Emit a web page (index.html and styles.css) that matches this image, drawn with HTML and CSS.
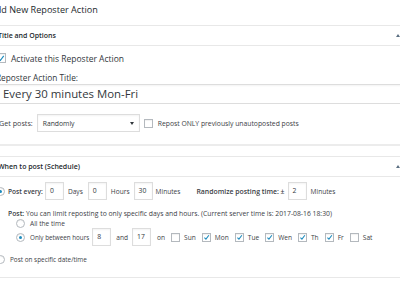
FILE: index.html
```html
<!DOCTYPE html>
<html>
<head>
<meta charset="utf-8">
<link rel="stylesheet" href="styles.css">
</head>
<body>
<div class="page">
  <h1 class="title">Add New Reposter Action</h1>

  <div class="box box-first">
    <div class="box-head"><span>Title and Options</span><span class="toggle"></span></div>
    <div class="box-body">
      <div class="row row-activate">
        <span class="cb checked"><svg viewBox="0 0 10 10"><path d="M2 5.2 L4.2 7.4 L8.4 1.8" /></svg></span>
        <span class="lbl-activate">Activate this Reposter Action</span>
      </div>
      <div class="field-label">Reposter Action Title:</div>
      <div class="big-input">Every 30 minutes Mon-Fri</div>
      <div class="row row-get">
        <span class="small get-lbl">Get posts:</span>
        <div class="select"><span>Randomly</span><span class="caret"></span></div>
        <span class="cb"></span>
        <span class="small">Repost ONLY previously unautoposted posts</span>
      </div>
    </div>
  </div>

  <div class="box box-second">
    <div class="box-head"><span>When to post (Schedule)</span><span class="toggle"></span></div>
    <div class="box-body">
      <div class="row row-every">
        <span class="radio checked"></span>
        <span class="tiny semi every">Post every:</span>
        <span class="num n-days">0</span><span class="tiny">Days</span>
        <span class="num n-hours">0</span><span class="tiny">Hours</span>
        <span class="num n-min">30</span><span class="tiny">Minutes</span>
        <span class="tiny semi rand">Randomize posting time: ±</span>
        <span class="num n-rand">2</span><span class="tiny">Minutes</span>
      </div>
      <div class="note small"><b>Post:</b> You can limit reposting to only specific days and hours. (Current server time is: 2017-08-16 18:30)</div>
      <div class="row row-all">
        <span class="radio"></span><span class="tiny">All the time</span>
      </div>
      <div class="row row-between">
        <span class="radio checked"></span><span class="tiny between-lbl">Only between hours</span>
        <span class="num n-from">8</span><span class="tiny">and</span>
        <span class="num n-to">17</span><span class="tiny">on</span>
        <span class="day"><span class="cb"></span><span class="tiny">Sun</span></span>
        <span class="day"><span class="cb checked"><svg viewBox="0 0 10 10"><path d="M2 5.2 L4.2 7.4 L8.4 1.8" /></svg></span><span class="tiny">Mon</span></span>
        <span class="day"><span class="cb checked"><svg viewBox="0 0 10 10"><path d="M2 5.2 L4.2 7.4 L8.4 1.8" /></svg></span><span class="tiny">Tue</span></span>
        <span class="day"><span class="cb checked"><svg viewBox="0 0 10 10"><path d="M2 5.2 L4.2 7.4 L8.4 1.8" /></svg></span><span class="tiny">Wen</span></span>
        <span class="day"><span class="cb checked"><svg viewBox="0 0 10 10"><path d="M2 5.2 L4.2 7.4 L8.4 1.8" /></svg></span><span class="tiny">Th</span></span>
        <span class="day"><span class="cb checked"><svg viewBox="0 0 10 10"><path d="M2 5.2 L4.2 7.4 L8.4 1.8" /></svg></span><span class="tiny">Fr</span></span>
        <span class="day"><span class="cb"></span><span class="tiny">Sat</span></span>
      </div>
      <div class="row row-date">
        <span class="radio"></span><span class="small date-lbl">Post on specific date/time</span>
      </div>
    </div>
  </div>
</div>
</body>
</html>
```
FILE: styles.css
```css
html, body {
  margin: 0;
  padding: 0;
  background: #ffffff;
  overflow: hidden;
}
body {
  width: 400px;
  height: 284px;
  font-family: "Open Sans", "Noto Sans", sans-serif;
  color: #32373c;
}
.page {
  margin-left: -14px;
  width: 430px;
}
.title {
  margin: 0 0 0 4px;
  height: 25px;
  line-height: 20px;
  font-size: 9.1px;
  font-weight: 400;
  color: #23282d;
}
.box {
  background: #fff;
  border-top: 1px solid #e8e8e8;
}
.box-first {
  border-bottom: 2px solid #ececec;
  margin-bottom: 10px;
}
.box-second {
  border-bottom: 1px solid #e8e8e8;
}
.box-head {
  height: 19px;
  line-height: 19px;
  padding: 0 16px 0 12px;
  border-bottom: 1px solid #e8e8e8;
  display: flex;
  justify-content: space-between;
  align-items: center;
  font-size: 7px;
  font-weight: 600;
  color: #23282d;
}
.toggle {
  width: 0;
  height: 0;
  border-left: 2.5px solid transparent;
  border-right: 2.5px solid transparent;
  border-bottom: 3px solid #5b6f82;
}
.box-body {
  padding: 0 0 0 10px;
}
.box-first .box-body {
  padding-top: 6px;
  padding-bottom: 12px;
}
.box-second .box-body {
  padding-top: 5px;
  padding-bottom: 13px;
}
.row {
  display: flex;
  align-items: center;
}
.small {
  font-size: 6.8px;
  color: #3c4146;
  white-space: nowrap;
}
.tiny {
  font-size: 6.6px;
  color: #3c4146;
  white-space: nowrap;
}
.semi {
  font-weight: 600;
}
.row-activate {
  height: 12px;
}
.lbl-activate {
  font-size: 8.5px;
  margin-left: 5px;
  color: #32373c;
}
.cb {
  width: 7px;
  height: 7px;
  border: 1px solid #b4b9be;
  background: #fff;
  flex: none;
  display: flex;
  align-items: center;
  justify-content: center;
  box-shadow: inset 0 1px 1px rgba(0,0,0,0.06);
}
.row-activate .cb {
  width: 8px;
  height: 8px;
}
.cb svg {
  width: 9px;
  height: 9px;
  fill: none;
  stroke: #1e8cbe;
  stroke-width: 1.5;
}
.field-label {
  margin-top: 9px;
  line-height: 10px;
  font-size: 8.3px;
  color: #32373c;
}
.big-input {
  margin-top: 1px;
  height: 18px;
  line-height: 18px;
  border: 1px solid #dddddd;
  border-right: none;
  padding-left: 6px;
  font-size: 11.4px;
  color: #32373c;
  box-shadow: inset 0 1px 2px rgba(0,0,0,0.05);
}
.row-get {
  margin-top: 10px;
  height: 18px;
}
.get-lbl {
  margin-left: 3px;
  font-size: 7.2px;
}
.select {
  margin-left: 4px;
  width: 91px;
  height: 16px;
  border: 1px solid #dddddd;
  display: flex;
  align-items: center;
  justify-content: space-between;
  padding: 0 5px 0 5px;
  font-size: 6.8px;
  color: #32373c;
  box-shadow: inset 0 1px 2px rgba(0,0,0,0.05);
}
.caret {
  width: 0;
  height: 0;
  border-left: 2px solid transparent;
  border-right: 2px solid transparent;
  border-top: 3px solid #32373c;
}
.row-get .cb {
  margin-left: 4px;
  margin-right: 5px;
}
.radio {
  width: 7px;
  height: 7px;
  border: 1px solid #b4b9be;
  border-radius: 50%;
  flex: none;
  display: flex;
  align-items: center;
  justify-content: center;
  background: #fff;
  box-shadow: inset 0 1px 1px rgba(0,0,0,0.06);
}
.radio.checked::after {
  content: "";
  width: 3px;
  height: 3px;
  border-radius: 50%;
  background: #1e8cbe;
}
.row-every {
  height: 18px;
}
.row-every .radio {
  margin-right: 3px;
}
.every {
  font-size: 6.6px;
}
.num {
  height: 16px;
  line-height: 16px;
  width: 13px;
  padding-left: 4px;
  border: 1px solid #dddddd;
  font-size: 6.8px;
  color: #32373c;
  flex: none;
  box-shadow: inset 0 1px 2px rgba(0,0,0,0.05);
}
.n-days { margin-left: 2px; margin-right: 4px; }
.n-hours { margin-left: 5px; margin-right: 4px; }
.n-min { margin-left: 4px; margin-right: 3px; }
.rand { margin-left: 16px; margin-right: 3px; font-size: 6.9px; }
.n-rand { margin-right: 4px; }
.note {
  margin-top: 9px;
  margin-left: 12px;
  line-height: 10px;
}
.note b {
  font-weight: 600;
}
.row-all {
  height: 9px;
  margin-left: 20px;
}
.row-all .radio, .row-between .radio {
  margin-right: 5px;
}
.row-between {
  height: 18px;
  margin-left: 20px;
}
.between-lbl {
  font-size: 6.3px;
}
.n-from { margin-left: 3px; margin-right: 5px; }
.n-to { margin-left: 4px; margin-right: 6px; }
.day {
  display: flex;
  align-items: center;
  margin-left: 6px;
}
.row-between .day:first-of-type {
  margin-left: 4px;
}
.day .cb {
  margin-right: 4px;
}
.row-date {
  margin-top: 8px;
  height: 10px;
}
.row-date .radio {
  margin-right: 5px;
}
.date-lbl {
  font-size: 6.4px;
}
```
